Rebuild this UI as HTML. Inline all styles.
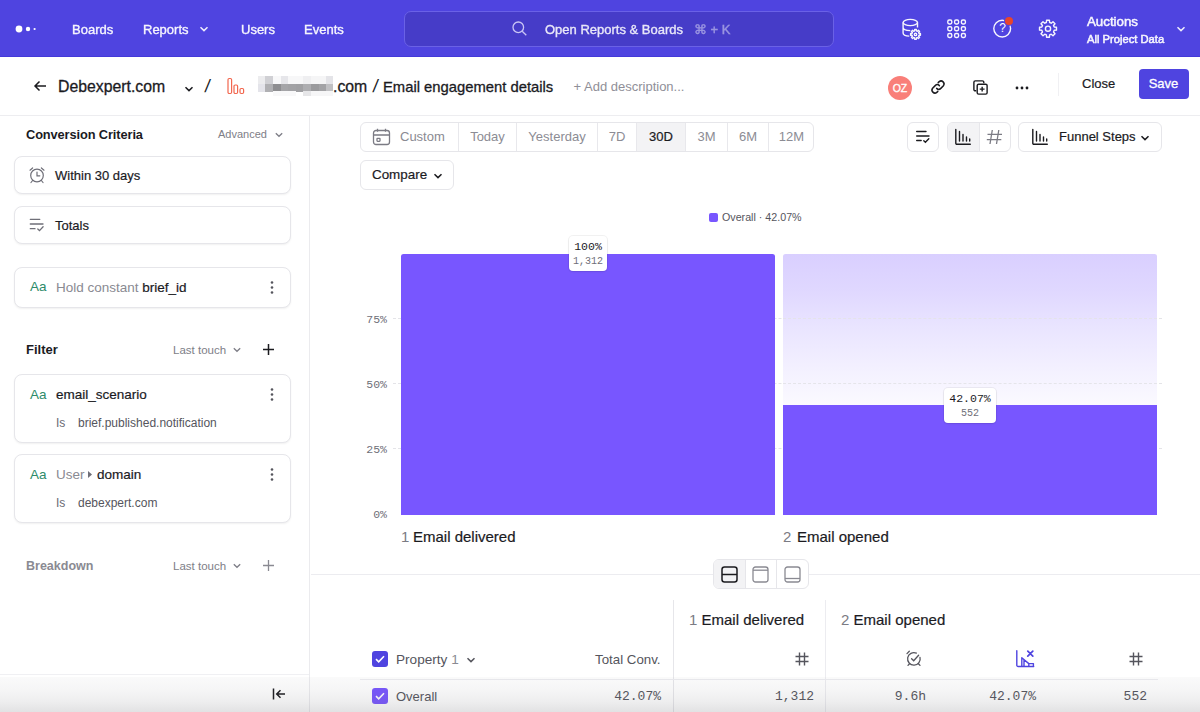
<!DOCTYPE html>
<html><head><meta charset="utf-8"><title>Email engagement details</title>
<style>
*{box-sizing:border-box;margin:0;padding:0}
html,body{width:1200px;height:712px;overflow:hidden;background:#fff}
body{font-family:"Liberation Sans",sans-serif;color:#1b1b1f;position:relative;font-size:13px}
.abs{position:absolute;white-space:nowrap}
.mono{font-family:"Liberation Mono",monospace}
#nav{position:absolute;left:0;top:0;width:1200px;height:57px;background:#4f44e0;box-shadow:inset 0 -1px 0 #4439d9}
#nav .t{position:absolute;color:#fff;font-size:13px;top:22px;line-height:16px;opacity:.95;-webkit-text-stroke:.35px #fff;white-space:nowrap}
#search{position:absolute;left:404px;top:11px;width:430px;height:36px;border-radius:7px;background:#463cc8;border:1px solid #6a61e6}
#hdr{position:absolute;left:0;top:57px;width:1200px;height:59px;background:#fff;border-bottom:1px solid #ededf0}
#left{position:absolute;left:0;top:116px;width:310px;height:596px;border-right:1px solid #ebebee;background:#fff}
.box{position:absolute;left:14px;width:277px;border:1px solid #e6e6ea;border-radius:8px;background:#fff;box-shadow:0 1px 2px rgba(0,0,0,.06)}
.seg{position:absolute;top:0;height:100%;border-left:1px solid #e8e8ec;color:#8c8c94;font-size:13px;line-height:28px;text-align:center}
.btn{position:absolute;border:1px solid #e6e6ea;border-radius:6px;background:#fff}

.yl{left:340px;width:47px;text-align:right;font-size:11.500px;line-height:14px;color:#6f6f78}
.gl{left:393px;width:769px;height:0;border-top:1px dashed #e4e4e8}
.lbl{background:#fff;border-radius:4px;box-shadow:0 0 0 1px rgba(0,0,0,.05),0 1px 2px rgba(0,0,0,.08);text-align:center}
.lbl .a{font-size:11.500px;line-height:13px;margin-top:3.500px;color:#1b1b1f}
.lbl .b{font-size:10px;line-height:12px;margin-top:3.500px;color:#6f6f78}
.cb{width:16px;height:16px;border-radius:3px}
.cb svg{display:block}
.tv{top:689px;font-size:13px;line-height:16px;color:#55555d}
</style></head><body>

<!-- NAV -->
<div id="nav">
  <svg class="abs" style="left:14px;top:22px" width="26" height="14" viewBox="0 0 26 14"><circle cx="5" cy="7" r="3.400" fill="#fff"/><circle cx="14" cy="7" r="2.200" fill="#fff"/><circle cx="20.600" cy="7" r="1.100" fill="#fff"/></svg>
  <div class="t" style="left:72px">Boards</div>
  <div class="t" style="left:143px">Reports</div>
  <svg class="abs" style="left:199px;top:25px" width="10" height="8" viewBox="0 0 10 8"><path d="M1.5 2.2 L5 5.6 L8.5 2.2" fill="none" stroke="#fff" stroke-width="1.5" opacity=".9"/></svg>
  <div class="t" style="left:241px">Users</div>
  <div class="t" style="left:304px">Events</div>
  <div id="search"></div>
  <svg class="abs" style="left:511px;top:20px" width="17" height="17" viewBox="0 0 17 17"><circle cx="7.3" cy="7.3" r="5.3" fill="none" stroke="#c9c5f5" stroke-width="1.3"/><path d="M11.2 11.2 L15.3 15.3" stroke="#c9c5f5" stroke-width="1.3"/></svg>
  <div class="t" style="left:545px;opacity:.88">Open Reports &amp; Boards</div>
  <div class="t" style="left:694px;opacity:.45;font-weight:normal">⌘ + K</div>
  <!-- right icons -->
  <svg class="abs" style="left:890px;top:10px" width="180" height="40" viewBox="0 0 180 40" fill="none" stroke="#fff" stroke-width="1.400" stroke-linejoin="round" opacity=".95">
    <ellipse cx="20.299999999999955" cy="12.5" rx="7.200" ry="3.100"/>
    <path d="M13.100000000000023 12.5V23c0 1.600 2.600 3 6.200 3.100M27.5 12.5V17.5M13.100000000000023 17.6c0 1.700 3 3 7.200 3M13.100000000000023 22.299999999999997" />
    <path d="M24.59 20.92 L24.67 19.47 L26.33 19.47 L26.41 20.92 L27.32 21.29 L28.40 20.33 L29.57 21.50 L28.61 22.58 L28.98 23.49 L30.43 23.57 L30.43 25.23 L28.98 25.31 L28.61 26.22 L29.57 27.30 L28.40 28.47 L27.32 27.51 L26.41 27.88 L26.33 29.33 L24.67 29.33 L24.59 27.88 L23.68 27.51 L22.60 28.47 L21.43 27.30 L22.39 26.22 L22.02 25.31 L20.57 25.23 L20.57 23.57 L22.02 23.49 L22.39 22.58 L21.43 21.50 L22.60 20.33 L23.68 21.29Z" fill="#4f44e0"/><circle cx="25.5" cy="24.4" r="1.200"/>
    <rect x="57.8" y="10.0" width="4" height="4" rx="1.4"/><rect x="57.8" y="16.7" width="4" height="4" rx="1.4"/><rect x="57.8" y="23.5" width="4" height="4" rx="1.4"/><rect x="64.6" y="10.0" width="4" height="4" rx="1.4"/><rect x="64.6" y="16.7" width="4" height="4" rx="1.4"/><rect x="64.6" y="23.5" width="4" height="4" rx="1.4"/><rect x="71.4" y="10.0" width="4" height="4" rx="1.4"/><rect x="71.4" y="16.7" width="4" height="4" rx="1.4"/><rect x="71.4" y="23.5" width="4" height="4" rx="1.4"/>
    <circle cx="112.20000000000005" cy="18.6" r="8.400"/>
    <path d="M156.38 12.51 L156.57 10.22 L159.43 10.22 L159.62 12.51 L161.24 13.18 L162.99 11.69 L165.01 13.71 L163.52 15.46 L164.19 17.08 L166.48 17.27 L166.48 20.13 L164.19 20.32 L163.52 21.94 L165.01 23.69 L162.99 25.71 L161.24 24.22 L159.62 24.89 L159.43 27.18 L156.57 27.18 L156.38 24.89 L154.76 24.22 L153.01 25.71 L150.99 23.69 L152.48 21.94 L151.81 20.32 L149.52 20.13 L149.52 17.27 L151.81 17.08 L152.48 15.46 L150.99 13.71 L153.01 11.69 L154.76 13.18Z"/><circle cx="158" cy="18.7" r="2.600"/>
  </svg>
  <div class="abs" style="left:997px;top:21px;width:11px;text-align:center;color:#fff;font-size:12px;line-height:15px">?</div>
  <div class="abs" style="left:1005px;top:17px;width:8px;height:8px;border-radius:4px;background:#e8452c;box-shadow:0 0 0 1px #4f44e0"></div>
  <div class="t" style="left:1087px;top:13.500px;-webkit-text-stroke:.5px #fff;font-size:13.300px">Auctions</div>
  <div class="t" style="left:1087px;top:31px;font-size:11.200px;-webkit-text-stroke:.5px #fff">All Project Data</div>
  <svg class="abs" style="left:1176px;top:25px" width="10" height="8" viewBox="0 0 10 8"><path d="M1.500 2.200 L5 5.600 L8.500 2.200" fill="none" stroke="#fff" stroke-width="1.500" opacity=".9"/></svg>
</div>

<!-- HEADER -->
<div id="hdr">
  <svg class="abs" style="left:33px;top:22px" width="14" height="14" viewBox="0 0 14 14" fill="none" stroke="#1b1b1f" stroke-width="1.5"><path d="M13 7H2M6.500 2.500 L2 7l4.500 4.500"/></svg>
  <div class="abs" style="left:58px;top:20px;font-size:15.800px;line-height:20px;-webkit-text-stroke:.3px #1b1b1f">Debexpert.com</div>
  <svg class="abs" style="left:184px;top:28px" width="10" height="8" viewBox="0 0 10 8"><path d="M1.500 2.200 L5 5.600 L8.500 2.200" fill="none" stroke="#1b1b1f" stroke-width="1.500"/></svg>
  <div class="abs" style="left:204.500px;top:18.500px;font-size:18px;line-height:20px;transform:skewX(-8deg)">/</div>
  <svg class="abs" style="left:227px;top:20px" width="18" height="18" viewBox="0 0 18 18" fill="none" stroke="#f2674f" stroke-width="1.200"><rect x="1" y="1.500" width="3.600" height="15" rx="1.200"/><rect x="7" y="8" width="3.600" height="8.500" rx="1.200"/><rect x="13" y="11.500" width="3.600" height="5" rx="1.200"/></svg>
  <div class="abs" style="left:0;top:0;filter:blur(.4px)"><i style="position:absolute;left:257.5px;top:19.3px;width:7.7px;height:8.0px;background:#ececee"></i><i style="position:absolute;left:265.0px;top:19.3px;width:7.8px;height:8.0px;background:#d0d0d4"></i><i style="position:absolute;left:272.6px;top:19.3px;width:8.1px;height:8.0px;background:#f8f8f9"></i><i style="position:absolute;left:280.5px;top:19.3px;width:7.7px;height:8.0px;background:#e6e6ea"></i><i style="position:absolute;left:288.0px;top:19.3px;width:7.7px;height:8.0px;background:#f7f7f8"></i><i style="position:absolute;left:295.5px;top:19.3px;width:8.1px;height:8.0px;background:#f7f7f8"></i><i style="position:absolute;left:303.4px;top:19.3px;width:7.8px;height:8.0px;background:#efeff1"></i><i style="position:absolute;left:311.0px;top:19.3px;width:8.1px;height:8.0px;background:#f5f5f6"></i><i style="position:absolute;left:318.9px;top:19.3px;width:7.7px;height:8.0px;background:#f5f5f6"></i><i style="position:absolute;left:326.4px;top:19.3px;width:6.8px;height:8.0px;background:#e4e4e8"></i><i style="position:absolute;left:257.5px;top:27.1px;width:7.7px;height:7.5px;background:#e4e4ea"></i><i style="position:absolute;left:265.0px;top:27.1px;width:7.8px;height:7.5px;background:#b0b0b3"></i><i style="position:absolute;left:272.6px;top:27.1px;width:8.1px;height:7.5px;background:#8e8e91"></i><i style="position:absolute;left:280.5px;top:27.1px;width:7.7px;height:7.5px;background:#a5a5a8"></i><i style="position:absolute;left:288.0px;top:27.1px;width:7.7px;height:7.5px;background:#a2a2a5"></i><i style="position:absolute;left:295.5px;top:27.1px;width:8.1px;height:7.5px;background:#a0a0a3"></i><i style="position:absolute;left:303.4px;top:27.1px;width:7.8px;height:7.5px;background:#adadb0"></i><i style="position:absolute;left:311.0px;top:27.1px;width:8.1px;height:7.5px;background:#9a9a9d"></i><i style="position:absolute;left:318.9px;top:27.1px;width:7.7px;height:7.5px;background:#a3a3a6"></i><i style="position:absolute;left:326.4px;top:27.1px;width:6.8px;height:7.5px;background:#c0c0c3"></i><i style="position:absolute;left:272.6px;top:34.4px;width:8.1px;height:4.8px;background:#f8f8f9"></i><i style="position:absolute;left:280.5px;top:34.4px;width:7.7px;height:4.8px;background:#f8f8f9"></i><i style="position:absolute;left:288.0px;top:34.4px;width:7.7px;height:4.8px;background:#f8f8f9"></i><i style="position:absolute;left:303.4px;top:34.4px;width:7.8px;height:4.8px;background:#e6e6e8"></i><i style="position:absolute;left:311.0px;top:34.4px;width:8.1px;height:4.8px;background:#f6f6f7"></i><i style="position:absolute;left:318.9px;top:34.4px;width:7.7px;height:4.8px;background:#f6f6f7"></i><i style="position:absolute;left:326.4px;top:34.4px;width:6.8px;height:4.8px;background:#f6f6f7"></i></div>
  <div class="abs" style="left:333px;top:20px;font-size:15.800px;line-height:20px;-webkit-text-stroke:.3px #1b1b1f">.com</div><div class="abs" style="left:372.500px;top:19px;font-size:18px;line-height:20px;transform:skewX(-8deg)">/</div><div class="abs" style="left:383px;top:20px;font-size:14.800px;line-height:20px;-webkit-text-stroke:.3px #1b1b1f">Email engagement details</div>
  <div class="abs" style="left:573.500px;top:22px;font-size:13px;line-height:16px;color:#8f8f98">+ Add description...</div>
  <div class="abs" style="left:888px;top:18.500px;width:24px;height:24px;border-radius:12px;background:#f97f79;color:#fff;font-size:10.500px;-webkit-text-stroke:.3px #fff;line-height:24px;text-align:center">OZ</div>
  <svg class="abs" style="left:929px;top:21px" width="18" height="18" viewBox="0 0 18 18" fill="none" stroke="#1b1b1f" stroke-width="1.500" stroke-linecap="round"><path d="M7.600 10.400a3 3 0 0 0 4.200 0l2.600-2.600a3 3 0 0 0-4.200-4.200l-1 1"/><path d="M10.400 7.600a3 3 0 0 0-4.200 0l-2.600 2.600a3 3 0 0 0 4.200 4.200l1-1"/></svg>
  <svg class="abs" style="left:971.500px;top:21.500px" width="17" height="17" viewBox="0 0 18 18" fill="none" stroke="#1b1b1f" stroke-width="1.500"><path d="M12.500 4.500v-1a1.500 1.500 0 0 0-1.500-1.500h-7.500a1.500 1.500 0 0 0-1.500 1.500v7.500a1.500 1.500 0 0 0 1.500 1.500h1"/><rect x="5.500" y="5.500" width="10.500" height="10.500" rx="1.500"/><path d="M10.750 8.200v5.100M8.200 10.750h5.100"/></svg>
  <svg class="abs" style="left:1014px;top:28px" width="16" height="6" viewBox="0 0 16 6" fill="#1b1b1f"><circle cx="3" cy="3" r="1.400"/><circle cx="8" cy="3" r="1.400"/><circle cx="13" cy="3" r="1.400"/></svg>
  <div class="abs" style="left:1058px;top:16px;width:1px;height:23px;background:#f0f0f3"></div>
  <div class="abs" style="left:1082px;top:19px;font-size:13px;line-height:16px;-webkit-text-stroke:.2px #1b1b1f">Close</div>
  <div class="abs" style="left:1138.500px;top:11.500px;width:50px;height:30px;border-radius:4px;background:#4f44e0;color:#fff;font-size:13px;line-height:29px;text-align:center;-webkit-text-stroke:.3px #fff">Save</div>
</div>

<!-- LEFT -->
<div id="left">
  <div class="abs" style="left:26px;top:11px;font-size:12.800px;font-weight:bold;line-height:16px;letter-spacing:-.1px">Conversion Criteria</div>
  <div class="abs" style="left:218px;top:11px;font-size:11px;line-height:14px;color:#7e7e87">Advanced</div>
  <svg class="abs ch" style="left:274px;top:15px" width="10" height="8" viewBox="0 0 10 8"><path d="M1.800 2.200 L5 5.300 L8.200 2.200" fill="none" stroke="#7e7e87" stroke-width="1.300"/></svg>

  <div class="box" style="top:40px;height:38px"></div>
  <svg class="abs" style="left:27px;top:49px" width="20" height="20" viewBox="0 0 20 20" fill="none" stroke="#6f6f78" stroke-width="1.200" stroke-linecap="round"><circle cx="10" cy="10.500" r="6.300"/><path d="M10 7v3.800h2.800M3 5.200 5.600 3M17 5.200 14.400 3M5.600 15.500 4 17.500M14.400 15.500 16 17.500"/></svg>
  <div class="abs" style="left:55px;top:52px;font-size:13px;line-height:16px;-webkit-text-stroke:.2px #1b1b1f">Within 30 days</div>

  <div class="box" style="top:90px;height:38px"></div>
  <svg class="abs" style="left:28px;top:100px" width="18" height="18" viewBox="0 0 18 18" fill="none" stroke="#6f6f78" stroke-width="1.300" stroke-linecap="round"><path d="M2.300 3.300h9.500M2.300 8h12.700M2.300 12.700h4.700M9.800 13l1.700 1.600 3.600-3.800"/></svg>
  <div class="abs" style="left:55px;top:101.500px;font-size:13px;line-height:16px;-webkit-text-stroke:.2px #1b1b1f">Totals</div>

  <div class="box" style="top:151px;height:41px"></div>
  <div class="abs" style="left:30px;top:163px;font-size:13.500px;line-height:16px;color:#2e8b6a">Aa</div>
  <div class="abs" style="left:56px;top:163.500px;font-size:13.500px;line-height:16px;color:#8a8a92">Hold constant <span style="color:#1b1b1f;-webkit-text-stroke:.2px #1b1b1f">brief_id</span></div>
  <svg class="abs" style="left:269px;top:164px" width="6" height="16" viewBox="0 0 6 16" fill="#55555d"><circle cx="3" cy="2.500" r="1.300"/><circle cx="3" cy="7.500" r="1.300"/><circle cx="3" cy="12.500" r="1.300"/></svg>

  <div class="abs" style="left:26px;top:226px;font-size:13px;font-weight:bold;line-height:16px">Filter</div>
  <div class="abs" style="left:173px;top:226.500px;font-size:11.500px;line-height:14px;color:#7e7e87">Last touch</div>
  <svg class="abs" style="left:232px;top:230px" width="10" height="8" viewBox="0 0 10 8"><path d="M1.800 2.200 L5 5.300 L8.200 2.200" fill="none" stroke="#7e7e87" stroke-width="1.300"/></svg>
  <svg class="abs" style="left:262px;top:227px" width="13" height="13" viewBox="0 0 13 13" stroke="#1b1b1f" stroke-width="1.500"><path d="M6.500 1v11M1 6.500h11"/></svg>

  <div class="box" style="top:258px;height:69px"></div>
  <div class="abs" style="left:30px;top:270.500px;font-size:13.500px;line-height:16px;color:#2e8b6a">Aa</div>
  <div class="abs" style="left:56px;top:270.500px;font-size:13.500px;line-height:16px;-webkit-text-stroke:.2px #1b1b1f">email_scenario</div>
  <svg class="abs" style="left:269px;top:271px" width="6" height="16" viewBox="0 0 6 16" fill="#55555d"><circle cx="3" cy="2.500" r="1.300"/><circle cx="3" cy="7.500" r="1.300"/><circle cx="3" cy="12.500" r="1.300"/></svg>
  <div class="abs" style="left:56px;top:300px;font-size:12px;line-height:14px;color:#6a6a73">Is</div>
  <div class="abs" style="left:78px;top:300px;font-size:12px;line-height:14px;color:#55555d">brief.published.notification</div>

  <div class="box" style="top:338px;height:69px"></div>
  <div class="abs" style="left:30px;top:350.500px;font-size:13.500px;line-height:16px;color:#2e8b6a">Aa</div>
  <div class="abs" style="left:56px;top:350.500px;font-size:13.500px;line-height:16px;color:#8a8a92">User</div>
  <svg class="abs" style="left:87px;top:354px" width="6" height="9" viewBox="0 0 6 9"><path d="M1 1l4 3.500L1 8z" fill="#6f6f78"/></svg>
  <div class="abs" style="left:97px;top:350.500px;font-size:13.500px;line-height:16px;-webkit-text-stroke:.2px #1b1b1f">domain</div>
  <svg class="abs" style="left:269px;top:351px" width="6" height="16" viewBox="0 0 6 16" fill="#55555d"><circle cx="3" cy="2.500" r="1.300"/><circle cx="3" cy="7.500" r="1.300"/><circle cx="3" cy="12.500" r="1.300"/></svg>
  <div class="abs" style="left:56px;top:380px;font-size:12px;line-height:14px;color:#6a6a73">Is</div>
  <div class="abs" style="left:78px;top:380px;font-size:12px;line-height:14px;color:#55555d">debexpert.com</div>

  <div class="abs" style="left:26px;top:441.500px;font-size:12.500px;font-weight:bold;line-height:16px;color:#8a8a92">Breakdown</div>
  <div class="abs" style="left:173px;top:442.500px;font-size:11.500px;line-height:14px;color:#7e7e87">Last touch</div>
  <svg class="abs" style="left:232px;top:446px" width="10" height="8" viewBox="0 0 10 8"><path d="M1.800 2.200 L5 5.300 L8.200 2.200" fill="none" stroke="#7e7e87" stroke-width="1.300"/></svg>
  <svg class="abs" style="left:262px;top:443px" width="13" height="13" viewBox="0 0 13 13" stroke="#8a8a92" stroke-width="1.300"><path d="M6.500 1v11M1 6.500h11"/></svg>

  <div class="abs" style="left:0;top:558px;width:309px;height:1px;background:#f0f0f3"></div>
  <svg class="abs" style="left:272px;top:572px" width="14" height="12" viewBox="0 0 14 12" fill="none" stroke="#1b1b1f" stroke-width="1.500"><path d="M1.500 0.500v11M13 6H5M8.500 2.200 4.700 6l3.800 3.800"/></svg>
</div>

<!-- MAIN -->
<div id="main">
  <!-- date range -->
  <div class="btn" style="left:360px;top:122px;width:454px;height:30px;overflow:hidden">
    <div class="seg" style="left:-1px;width:98px;border-left:none"></div>
    <div class="seg" style="left:97px;width:58px">Today</div>
    <div class="seg" style="left:155px;width:81px">Yesterday</div>
    <div class="seg" style="left:236px;width:39px">7D</div>
    <div class="seg" style="left:275px;width:49px;background:#f3f3f5;color:#1b1b1f;-webkit-text-stroke:.2px #1b1b1f">30D</div>
    <div class="seg" style="left:324px;width:42px">3M</div>
    <div class="seg" style="left:366px;width:41px">6M</div>
    <div class="seg" style="left:407px;width:46px">12M</div>
  </div>
  <svg class="abs" style="left:372px;top:128px" width="19" height="18" viewBox="0 0 19 18" fill="none" stroke="#7b7b84" stroke-width="1.300"><rect x="1.500" y="2.500" width="16" height="14" rx="2.500"/><path d="M1.500 7h16M5.500 0.800v3M13.500 0.800v3"/><rect x="5" y="10.300" width="3" height="3" rx=".5"/></svg>
  <div class="abs" style="left:400px;top:129px;font-size:13px;line-height:16px;color:#8a8a92">Custom</div>

  <div class="btn" style="left:360px;top:160px;width:94px;height:30px"></div>
  <div class="abs" style="left:372px;top:167px;font-size:13.400px;line-height:16px;-webkit-text-stroke:.2px #1b1b1f">Compare</div>
  <svg class="abs" style="left:433px;top:172px" width="10" height="8" viewBox="0 0 10 8"><path d="M1.500 2.200 L5 5.600 L8.500 2.200" fill="none" stroke="#1b1b1f" stroke-width="1.500"/></svg>

  <!-- right tools -->
  <div class="btn" style="left:907px;top:122px;width:32px;height:30px"></div>
  <svg class="abs" style="left:914px;top:128px" width="18" height="18" viewBox="0 0 18 18" fill="none" stroke="#1b1b1f" stroke-width="1.400" stroke-linecap="round"><path d="M2.700 3.500h9.300M2.700 8h12.300M2.700 12.500h4.500M9.800 12.800l1.600 1.500 3.400-3.500"/></svg>
  <div class="btn" style="left:947px;top:122px;width:64px;height:30px;overflow:hidden"><div style="position:absolute;left:0;top:0;width:32px;height:100%;background:#f3f3f5;border-right:1px solid #e6e6ea"></div></div>
  <svg class="abs ic-bars" style="left:954px;top:128px" width="18" height="18" viewBox="0 0 18 18" fill="none" stroke="#1b1b1f" stroke-width="1.400" stroke-linecap="round"><path d="M1.800 1.500v13.700a1 1 0 0 0 1 1h13.500M5.500 3.500v9.500M9 6.500v6.500M12.500 9v4M15.700 11v2"/></svg>
  <svg class="abs" style="left:986px;top:129px" width="17" height="16" viewBox="0 0 17 16" fill="none" stroke="#7b7b84" stroke-width="1.300"><path d="M6.300 1 4 15M12.800 1 10.500 15M1.500 5.300h14.500M0.800 10.700h14.500"/></svg>
  <div class="btn" style="left:1018px;top:122px;width:144px;height:30px"></div>
  <svg class="abs ic-bars" style="left:1031px;top:128px" width="18" height="18" viewBox="0 0 18 18" fill="none" stroke="#1b1b1f" stroke-width="1.400" stroke-linecap="round"><path d="M1.800 1.500v13.700a1 1 0 0 0 1 1h13.500M5.500 3.500v9.500M9 6.500v6.500M12.500 9v4M15.700 11v2"/></svg>
  <div class="abs" style="left:1059px;top:129px;font-size:13px;line-height:16px;-webkit-text-stroke:.2px #1b1b1f">Funnel Steps</div>
  <svg class="abs" style="left:1140px;top:134px" width="10" height="8" viewBox="0 0 10 8"><path d="M1.500 2.200 L5 5.600 L8.500 2.200" fill="none" stroke="#1b1b1f" stroke-width="1.500"/></svg>

  <!-- legend -->
  <div class="abs" style="left:709px;top:213px;width:9px;height:9px;border-radius:2px;background:#7856ff"></div>
  <div class="abs" style="left:722px;top:211px;font-size:10.700px;line-height:13px;color:#55555d">Overall · 42.07%</div>

  <!-- chart -->
  <div class="abs mono yl" style="top:313px">75%</div>
  <div class="abs mono yl" style="top:378px">50%</div>
  <div class="abs mono yl" style="top:443px">25%</div>
  <div class="abs mono yl" style="top:508px">0%</div>
  <div class="abs gl" style="top:318px"></div>
  <div class="abs gl" style="top:383px"></div>
  <div class="abs gl" style="top:448px"></div>
  <div class="abs" style="left:401px;top:253.700px;width:374px;height:261.300px;background:#7856ff;border-radius:2.500px 2.500px 0 0"></div>
  <div class="abs" style="left:783px;top:253.700px;width:374px;height:152px;background:linear-gradient(180deg,#d9cfff 0%,#e0d8ff 25%,#e9e4ff 47%,#f3f0ff 75%,#fbfaff 100%);border-radius:2.500px 2.500px 0 0"></div>
  <div class="abs gl" style="top:318px;left:783px;width:374px;opacity:.9"></div>
  <div class="abs gl" style="top:383px;left:783px;width:374px;opacity:.9"></div>
  <div class="abs" style="left:783px;top:405px;width:374px;height:110px;background:#7856ff"></div>

  <div class="abs lbl" style="left:569px;top:236px;width:38px;height:35px"><div class="mono a">100%</div><div class="mono b">1,312</div></div>
  <div class="abs lbl" style="left:944px;top:388px;width:52px;height:35px"><div class="mono a">42.07%</div><div class="mono b">552</div></div>

  <div class="abs" style="left:401px;top:528px;font-size:15px;line-height:18px;color:#7b7b84">1</div><div class="abs" style="left:413px;top:528px;font-size:15px;line-height:18px;-webkit-text-stroke:.2px #1b1b1f">Email delivered</div>
  <div class="abs" style="left:783px;top:528px;font-size:15px;line-height:18px;color:#7b7b84">2</div><div class="abs" style="left:797px;top:528px;font-size:15px;line-height:18px;-webkit-text-stroke:.2px #1b1b1f">Email opened</div>

  <!-- divider + toggle -->
  <div class="abs" style="left:311px;top:574px;width:889px;height:1px;background:#ececf0"></div>
  <div class="btn" style="left:713px;top:559px;width:96px;height:30px;overflow:hidden"><div style="position:absolute;left:0;top:0;width:32px;height:100%;background:#f3f3f5;border-right:1px solid #e6e6ea"></div><div style="position:absolute;left:62px;top:0;width:1px;height:100%;background:#e6e6ea"></div></div>
  <svg class="abs" style="left:721px;top:566px" width="17" height="17" viewBox="0 0 17 17" fill="none" stroke="#1b1b1f" stroke-width="1.500"><rect x="1" y="1" width="15" height="15" rx="2.500"/><path d="M1 8.500h15"/></svg>
  <svg class="abs" style="left:752px;top:566px" width="17" height="17" viewBox="0 0 17 17" fill="none" stroke="#8a8a92" stroke-width="1.300"><rect x="1" y="1" width="15" height="15" rx="2.500"/><path d="M1 4.200h15"/></svg>
  <svg class="abs" style="left:784px;top:566px" width="17" height="17" viewBox="0 0 17 17" fill="none" stroke="#8a8a92" stroke-width="1.300"><rect x="1" y="1" width="15" height="15" rx="2.500"/><path d="M1 12.500h15"/></svg>

  <!-- table -->
  <div class="abs" style="left:673px;top:600px;width:1px;height:112px;background:#e6e6ea"></div>
  <div class="abs" style="left:825px;top:600px;width:1px;height:112px;background:#ececf0"></div>
  <div class="abs" style="left:689px;top:611px;font-size:15px;line-height:18px"><span style="color:#7b7b84">1</span>&nbsp;<span style="-webkit-text-stroke:.2px #1b1b1f">Email delivered</span></div>
  <div class="abs" style="left:841px;top:611px;font-size:15px;line-height:18px"><span style="color:#7b7b84">2</span>&nbsp;<span style="-webkit-text-stroke:.2px #1b1b1f">Email opened</span></div>

  <div class="abs cb" style="left:372px;top:651px;background:#4f44e0"><svg width="16" height="16" viewBox="0 0 16 16"><path d="M4 8.200l2.700 2.600L12 5.300" fill="none" stroke="#fff" stroke-width="1.600"/></svg></div>
  <div class="abs" style="left:396px;top:652px;font-size:13.600px;line-height:16px;color:#55555d">Property <span style="color:#8a8a92">1</span></div>
  <svg class="abs" style="left:466px;top:656px" width="10" height="8" viewBox="0 0 10 8"><path d="M1.500 2.200 L5 5.600 L8.500 2.200" fill="none" stroke="#55555d" stroke-width="1.500"/></svg>
  <div class="abs" style="left:595px;top:652px;font-size:13.300px;line-height:16px;color:#55555d">Total Conv.</div>
  <svg class="abs hash" style="left:794px;top:651px" width="16" height="16" viewBox="0 0 16 16" fill="none" stroke="#55555d" stroke-width="1.400"><path d="M5.500 1.500v13M10.500 1.500v13M1.500 5.500h13M1.500 10.500h13"/></svg>
  <svg class="abs" style="left:905px;top:650px" width="18" height="18" viewBox="0 0 18 18" fill="none" stroke="#55555d" stroke-width="1.300" stroke-linecap="round"><path d="M15 7.300a6.300 6.300 0 1 1-3.600-4.200M6.600 8.700l2.100 2.100 4.900-5.600M2 3.600 4.300 1.300M4.600 13.700 3 15.400M13.400 13.700 15 15.400"/></svg>
  <svg class="abs" style="left:1016px;top:650px" width="19" height="18" viewBox="0 0 19 18" fill="none" stroke="#4f44e0" stroke-width="1.400" stroke-linecap="round" stroke-linejoin="round"><path d="M0.800 0.800V15.200a1.300 1.300 0 0 0 1.300 1.300H17.700M5.800 16.300V7.800l7 5.800h4.600v2.700M8 10v6.300M12.800 13.800v2.500"/><path d="M11.800 1.200l5 5M16.800 1.200l-5 5" stroke-width="1.700"/></svg>
  <svg class="abs hash" style="left:1128px;top:651px" width="16" height="16" viewBox="0 0 16 16" fill="none" stroke="#55555d" stroke-width="1.400"><path d="M5.500 1.500v13M10.500 1.500v13M1.500 5.500h13M1.500 10.500h13"/></svg>

  <div class="abs" style="left:360px;top:679px;width:798px;height:1px;background:#ececf0"></div>
  <div class="abs cb" style="left:372px;top:688px;background:#7856ff"><svg width="16" height="16" viewBox="0 0 16 16"><path d="M4 8.200l2.700 2.600L12 5.300" fill="none" stroke="#fff" stroke-width="1.600"/></svg></div>
  <div class="abs" style="left:396px;top:689px;font-size:13px;line-height:16px;color:#55555d">Overall</div>
  <div class="abs mono tv" style="right:539px">42.07%</div>
  <div class="abs mono tv" style="right:386px">1,312</div>
  <div class="abs mono tv" style="right:274px">9.6h</div>
  <div class="abs mono tv" style="right:164px">42.07%</div>
  <div class="abs mono tv" style="right:53px">552</div>

  <!-- bottom fade -->
  <div class="abs" style="left:0;top:677px;width:1200px;height:35px;background:linear-gradient(180deg,rgba(100,100,108,.03) 0%,rgba(100,100,108,.06) 35%,rgba(100,100,108,.11) 70%,rgba(100,100,108,.19) 100%);pointer-events:none"></div>
</div>
</body></html>
